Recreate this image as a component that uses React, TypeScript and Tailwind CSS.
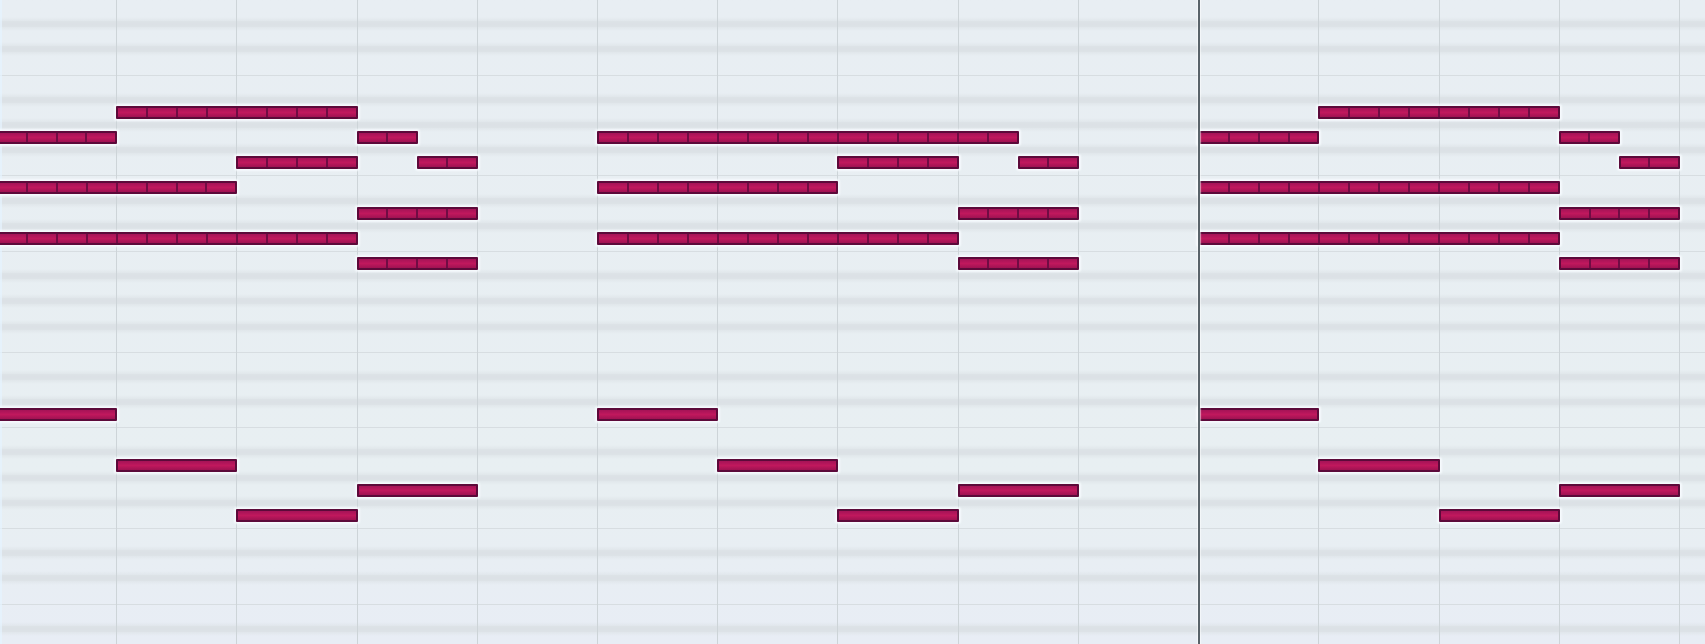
type Note = { row: number; start: number; steps: number; split?: boolean };

// Edges between white keys; true where a black key lies between them.
const octave = [false, true, true, false, true, true, true];
const lanes = Array.from({ length: 26 }, (_, i) => octave[i % 7]);
const beats = Array.from({ length: 14 }, (_, i) => i);

// Starts and lengths are counted in steps, four to a beat.
const bass = (bar: number): Note[] => [
  { row: 17, start: bar, steps: 4 },
  { row: 19, start: bar + 4, steps: 4 },
  { row: 21, start: bar + 8, steps: 4 },
  { row: 20, start: bar + 12, steps: 4 },
];

const lastChord = (bar: number): Note[] => [
  { row: 7, start: bar + 14, steps: 2, split: true },
  { row: 9, start: bar + 12, steps: 4, split: true },
  { row: 11, start: bar + 12, steps: 4, split: true },
];

const notes: Note[] = [
  { row: 5, start: 4, steps: 8, split: true },
  { row: 6, start: 0, steps: 4, split: true },
  { row: 6, start: 12, steps: 2, split: true },
  { row: 7, start: 8, steps: 4, split: true },
  { row: 8, start: 0, steps: 8, split: true },
  { row: 10, start: 0, steps: 12, split: true },
  ...lastChord(0),
  ...bass(0),
  { row: 6, start: 20, steps: 14, split: true },
  { row: 7, start: 28, steps: 4, split: true },
  { row: 8, start: 20, steps: 8, split: true },
  { row: 10, start: 20, steps: 12, split: true },
  ...lastChord(20),
  ...bass(20),
  { row: 5, start: 44, steps: 8, split: true },
  { row: 6, start: 40, steps: 4, split: true },
  { row: 6, start: 52, steps: 2, split: true },
  { row: 8, start: 40, steps: 12, split: true },
  { row: 10, start: 40, steps: 12, split: true },
  ...lastChord(40),
  ...bass(40),
];

function KeyLanes() {
  return (
    <div className="col-start-1 row-start-1 grid grid-rows-[repeat(26,minmax(0,1fr))]">
      {lanes.map((black, i) => (
        <div key={i}>
          <div
            className={
              black
                ? "-mt-[7px] h-[14px] bg-linear-to-b from-transparent via-[#dbe1e5] to-transparent"
                : "h-px bg-[#d7dde1]"
            }
          />
          {black && <div className="-mt-[10px] h-[6px] bg-[#dbe1e5]/70" />}
        </div>
      ))}
    </div>
  );
}

function BeatLines() {
  return (
    <div className="col-start-1 row-start-1 grid grid-cols-[repeat(57,minmax(0,1fr))]">
      {beats.map((beat) => (
        <div key={beat} className="col-span-4 -mr-px border-r border-[#cdd4d8]" />
      ))}
    </div>
  );
}

function NoteBar({ row, start, steps, split }: Note) {
  return (
    <div
      className="-mr-px flex h-[13px] self-center rounded-[1px] border-2 border-[#5c0a3a] bg-linear-to-b from-[#a51357] via-[#c0185d] to-[#a01252] shadow-[0_0_2px_2px_rgba(248,251,255,0.85)]"
      style={{ gridRow: row, gridColumn: `${start + 1} / span ${steps}` }}
    >
      {Array.from({ length: split ? steps : 1 }, (_, i) => (
        <div
          key={i}
          className="flex-1 border-r-2 border-[#700c44] last:border-r-0"
        />
      ))}
    </div>
  );
}

export default function App() {
  return (
    <main
      aria-label="Piano roll"
      className="h-screen w-full overflow-hidden bg-linear-to-b from-[#e8eef3] via-[#e8eff2] via-75% to-[#e8edf5]"
    >
      <div className="-mt-px -ml-1 grid h-[calc(100%+11px)] w-[calc(100%+8px)] grid-cols-1 grid-rows-1">
        <KeyLanes />
        <BeatLines />
        <div className="col-start-1 row-start-1 ml-1 w-[2px] bg-[#e6f3ff]/70" />
        <div className="col-start-1 row-start-1 grid grid-cols-[repeat(57,minmax(0,1fr))] grid-rows-[repeat(26,minmax(0,1fr))]">
          {notes.map((note, i) => (
            <NoteBar key={i} {...note} />
          ))}
          <div className="col-start-41 row-span-full w-[2px] bg-[#59636a] shadow-[0_0_1px_1px_rgba(255,255,255,0.55)]" />
        </div>
      </div>
    </main>
  );
}
